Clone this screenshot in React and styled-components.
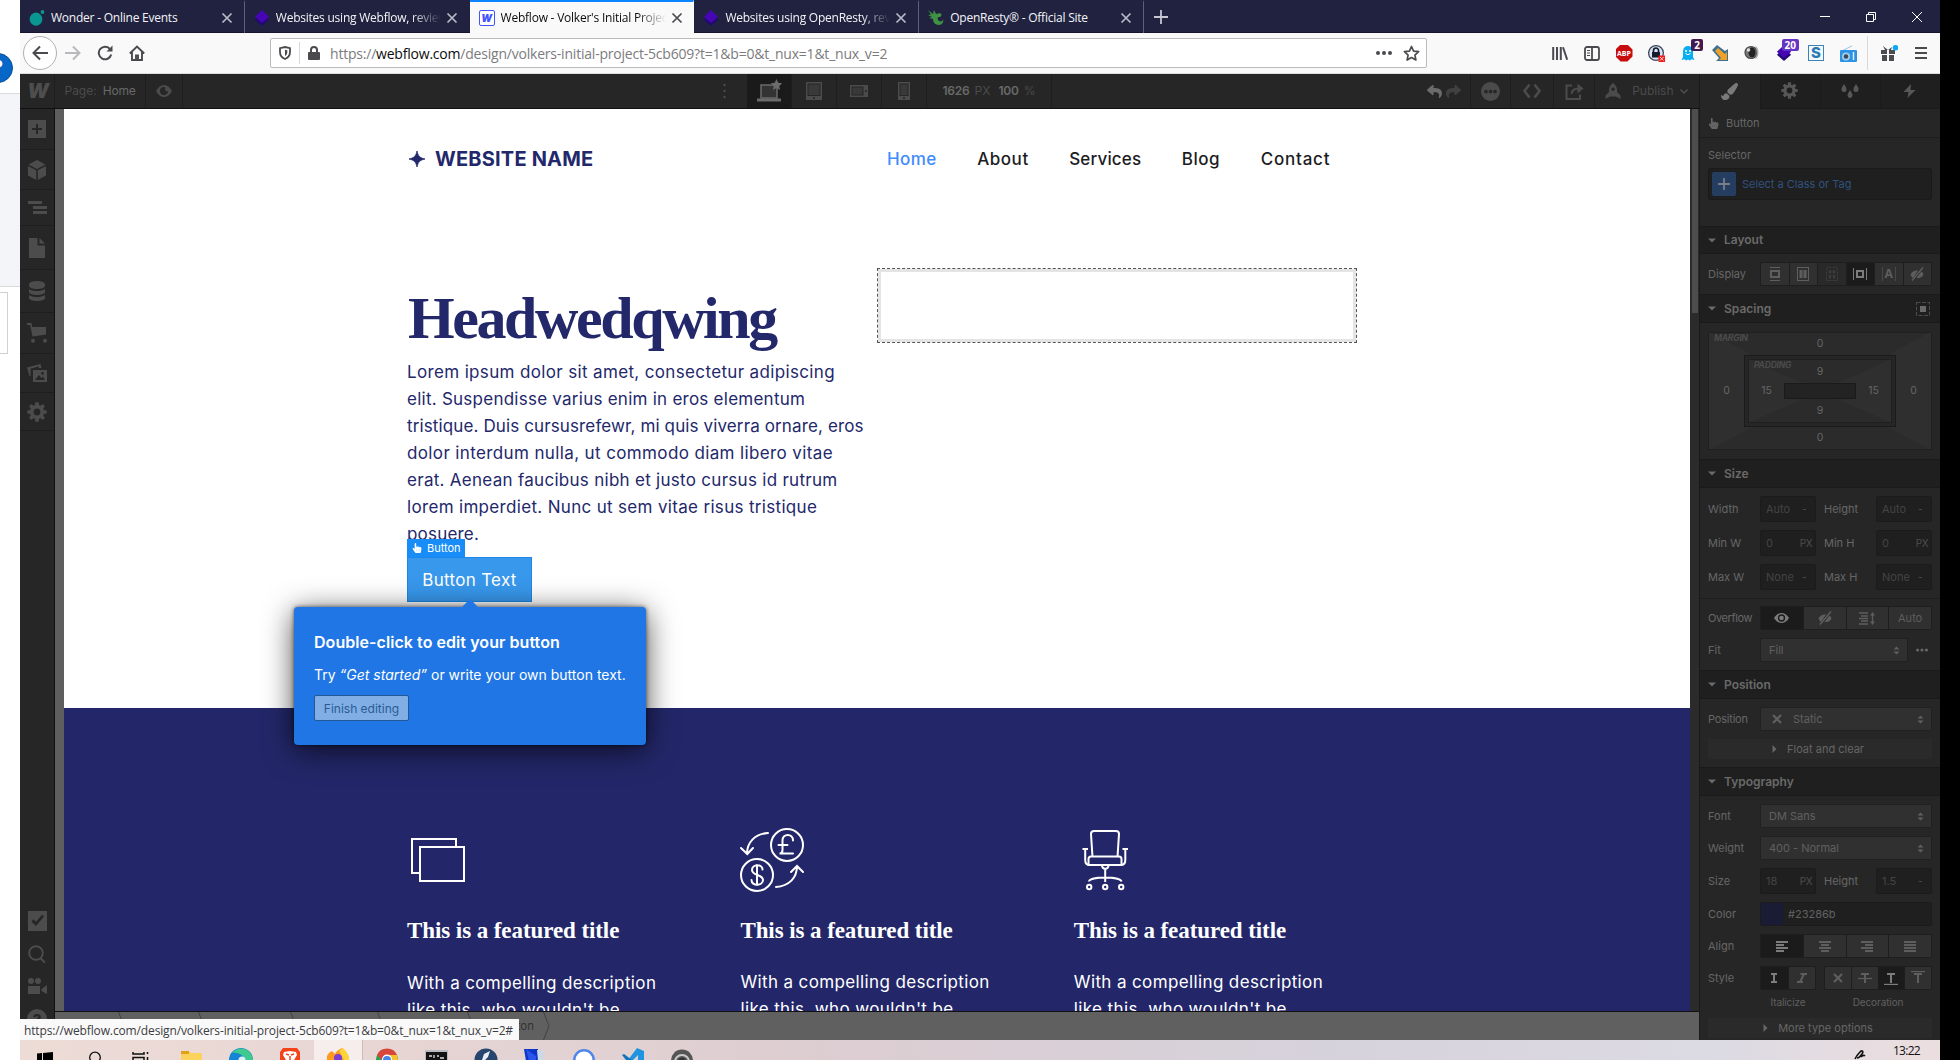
import React from "react";
import styled, { createGlobalStyle, css } from "styled-components";
import { FaPaintBrush, FaReply, FaShare, FaHandPointer } from "react-icons/fa";

const Global = createGlobalStyle`
  *, *::before, *::after { box-sizing: border-box; }
  body { margin: 0; background: #000; }
  svg { display: block; flex: none; }
`;

const UI = `Inter, "Liberation Sans", sans-serif`;
const SYS = `"Open Sans", "Noto Sans", sans-serif`;
const SERIF = `"Liberation Serif", serif`;

/* ---------- desktop frame ---------- */
const Desktop = styled.div`
  display: grid;
  grid-template-columns: 20px 1920px 20px;
  width: 1960px;
  height: 1060px;
  overflow: hidden;
  background: #000;
  font-family: ${UI};
`;
const Behind = styled.div`
  background: #fff;
  overflow: hidden;
  display: flex;
  flex-direction: column;
`;
const BehindTop = styled.div`
  height: 93px;
  padding-top: 53px;
`;
const HelpDot = styled.div`
  width: 30px;
  height: 30px;
  margin-left: -17px;
  border-radius: 50%;
  background: #0667c8;
  border: 1px solid #0a4f96;
  color: #fff;
  font: 600 19px/27px ${UI};
  text-align: center;
`;
const BehindGray = styled.div`
  height: 194px;
  background: #f4f5f8;
  border: solid #d9dadc;
  border-width: 1px 0;
`;
const BehindBox = styled.div`
  width: 8px;
  height: 62px;
  margin-top: 5px;
  border: solid #cfd0d2;
  border-width: 1px 1px 1px 0;
`;
const Window = styled.div`
  display: flex;
  flex-direction: column;
  overflow: hidden;
`;

/* ---------- browser ---------- */
const TabBar = styled.div`
  height: 33px;
  display: flex;
  background: #20223f;
  box-shadow: inset 0 -1px #14152b;
`;
const TabBox = styled.div`
  width: 224.8px;
  display: flex;
  align-items: center;
  padding: 1px 0 0 9px;
  color: ${(p) => (p.$active ? "#0c0c0d" : "#f4f4f8")};
  background: ${(p) => (p.$active ? "#f9f9fa" : "transparent")};
  border-top: 2px solid ${(p) => (p.$active ? "#0a84ff" : "transparent")};
  border-right: 1px solid ${(p) => (p.$line ? "#5f6078" : "transparent")};
  font: 12px/16px ${SYS};
`;
const TabTitle = styled.span`
  width: 165px;
  margin-left: 6px;
  overflow: hidden;
  white-space: nowrap;
  letter-spacing: -0.23px;
  ${(p) => p.$fade && css`mask-image: linear-gradient(90deg, #000 136px, transparent 165px);`}
`;
const TabClose = styled.span`
  margin-left: 5px;
  color: ${(p) => (p.$active ? "#4a4a4f" : "#b9bac8")};
`;
const NewTab = styled.div`
  width: 35px;
  display: grid;
  place-items: center;
  color: #c6c7d2;
`;
const WindowButtons = styled.div`
  margin-left: auto;
  display: flex;
  color: #fff;
`;
const WindowButton = styled.div`
  width: 46px;
  display: grid;
  place-items: center;
`;
const NavBar = styled.div`
  height: 41px;
  display: flex;
  align-items: center;
  background: #f9f9fa;
  border-bottom: 1px solid #dcdcdf;
  color: #4a4a4f;
`;
const BackButton = styled.div`
  width: 34px;
  height: 34px;
  margin-left: 3px;
  border: 1px solid #b1b1b3;
  border-radius: 50%;
  background: #fff;
  display: grid;
  place-items: center;
`;
const NavIcon = styled.div`
  width: 32px;
  display: grid;
  place-items: center;
  color: ${(p) => (p.$dim ? "#b9b9bb" : "#4a4a4f")};
`;
const UrlBox = styled.div`
  width: 1157px;
  height: 30px;
  margin-left: 117px;
  padding: 0 6px 0 8px;
  display: flex;
  align-items: center;
  background: #fff;
  border: 1px solid #bababc;
  border-radius: 2px;
`;
const UrlSep = styled.i`
  width: 1px;
  height: 22px;
  margin: 0 8px;
  background: #d7d7db;
`;
const Url = styled.span`
  margin-left: 10px;
  padding-top: 2px;
  font: 14px/20px ${SYS};
  letter-spacing: -0.21px;
  color: #7b7b7e;
  b { font-weight: 400; color: #0c0c0d; }
`;
const UrlActions = styled.div`
  margin-left: auto;
  display: flex;
  align-items: center;
  gap: 11px;
`;
const Extensions = styled.div`
  display: flex;
  margin-left: 117px;
`;
const Ext = styled.div`
  position: relative;
  width: 32px;
  height: 34px;
  display: grid;
  place-items: center;
`;
const Badge = styled.span`
  position: absolute;
  right: 1px;
  top: 3px;
  height: 12px;
  padding: 0 3px;
  border-radius: 2px;
  background: ${(p) => p.$bg};
  color: #fff;
  font: 700 10px/12px ${SYS};
`;
const Abp = styled.span`
  width: 17px;
  height: 17px;
  background: #c70d0d;
  color: #fff;
  clip-path: polygon(30% 0, 70% 0, 100% 30%, 100% 70%, 70% 100%, 30% 100%, 0 70%, 0 30%);
  font: 700 7px/17px ${SYS};
  text-align: center;
`;
const SBox = styled.span`
  width: 16px;
  height: 16px;
  background: #f4f9fd;
  border: 1px solid #3f83b5;
  color: #2b79b4;
  font: 800 15px/14px ${UI};
  text-align: center;
`;
const MenuGroup = styled.div`
  display: flex;
  align-items: center;
  height: 34px;
  margin-left: 3px;
  border-left: 1px solid #d9d9dc;
  padding-left: 5px;
`;

/* ---------- designer ---------- */
const Designer = styled.div`
  height: 966px;
  display: grid;
  grid-template-columns: 1679px 241px;
  background: #262626;
`;
const Main = styled.div`
  display: flex;
  flex-direction: column;
  min-width: 0;
`;
const Toolbar = styled.div`
  height: 35px;
  display: flex;
  background: #262626;
  border-bottom: 1px solid #111;
  color: #4b4b4b;
  font: 12px/34px ${UI};
`;
const ToolCell = styled.div`
  width: ${(p) => p.$w}px;
  display: flex;
  align-items: center;
  justify-content: center;
  gap: ${(p) => p.$gap || 0}px;
  background: ${(p) => (p.$on ? "#1a1a1a" : "transparent")};
  border-right: 1px solid ${(p) => (p.$plain ? "transparent" : "#1e1e1e")};
  color: ${(p) => (p.$on ? "#6b6b6b" : "inherit")};
  white-space: nowrap;
`;
const Strong = styled.span`
  color: #696969;
  font-weight: ${(p) => (p.$bold ? 600 : 400)};
  letter-spacing: -0.2px;
  margin-left: ${(p) => p.$ml || 0}px;
`;
const Wordmark = styled.span`
  font: italic 900 20px/30px ${UI};
  color: #4e4e4e;
  transform: translateX(1px);
`;
const PageTools = styled.div`
  display: flex;
  width: 683px;
`;
const Spacer = styled.div`flex: 1;`;
const Work = styled.div`
  height: 931px;
  display: grid;
  grid-template-columns: 35px 1fr;
`;
const Rail = styled.div`
  display: flex;
  flex-direction: column;
  background: #262626;
  border-right: 1px solid #111;
  color: #4c4c4c;
  overflow: hidden;
`;
const RailItem = styled.div`
  height: ${(p) => p.$h}px;
  flex: none;
  display: grid;
  place-items: center;
  border-bottom: 1px solid ${(p) => (p.$plain ? "transparent" : "#1e1e1e")};
`;
const HelpRow = styled.div`
  height: 35px;
  flex: none;
  display: flex;
  justify-content: center;
  padding-top: 4px;
`;
const HelpIcon = styled.span`
  width: 20px;
  height: 20px;
  border-radius: 50%;
  background: #4c4c4c;
  color: #262626;
  font: 800 15px/21px ${UI};
  text-align: center;
`;
const Stage = styled.div`
  display: flex;
  flex-direction: column;
  min-width: 0;
`;
const View = styled.div`
  height: 903px;
  display: grid;
  grid-template-columns: 9px 1626px 9px;
  background: #5e5e5e;
  border-bottom: 1px solid #111;
`;
const Site = styled.div`
  grid-column: 2;
  height: 902px;
  overflow: hidden;
  background: #fff;
`;
const ScrollTrack = styled.div`
  background: #2b2b2b;
  padding-left: 2px;
`;
const ScrollThumb = styled.div`
  width: 6px;
  height: 204px;
  background: #4d4d4d;
`;
const Crumbs = styled.div`
  position: relative;
  height: 28px;
  display: flex;
  background: #606060;
  color: #333;
  font: 11.5px/28px ${UI};
`;
const Crumb = styled.div`
  width: ${(p) => p.$w}px;
  display: flex;
  justify-content: flex-end;
  span { margin-right: 9px; }
`;
const Status = styled.div`
  position: absolute;
  left: -35px;
  top: 7px;
  width: 499px;
  height: 21px;
  padding-left: 4px;
  background: #f9f9fa;
  color: #3c3c40;
  font: 12px/23px ${SYS};
  letter-spacing: -0.135px;
  white-space: nowrap;
`;

/* ---------- website ---------- */
const Hero = styled.section`
  height: 599px;
  padding: 0 0 0 343px;
`;
const SiteNav = styled.header`
  height: 159px;
  display: flex;
  align-items: flex-start;
  padding-top: 38px;
`;
const Brand = styled.div`
  width: 480px;
  display: flex;
  align-items: center;
  gap: 10px;
  padding-left: 2px;
  color: #23286b;
  font: 700 20px/24px ${UI};
  letter-spacing: 0.2px;
`;
const NavLinks = styled.nav`
  display: flex;
  gap: 40.5px;
  padding-top: 2px;
`;
const NavLink = styled.a`
  font: 500 17px/20px ${UI};
  letter-spacing: ${(p) => p.$ls}px;
  color: ${(p) => (p.$on ? "#3f8cff" : "#1c1c1f")};
`;
const HeroGrid = styled.div`
  display: grid;
  grid-template-columns: 470px 480px;
  align-items: start;
`;
const Copy = styled.div`
  padding-top: 17px;
  color: #23286b;
`;
const Heading = styled.h1`
  margin: 0 0 8px;
  padding-left: 1px;
  font: 700 60px/66px ${SERIF};
  letter-spacing: -2.4px;
`;
const TextLine = styled.div`
  font: 17px/27px ${UI};
  letter-spacing: ${(p) => p.$ls}px;
  white-space: nowrap;
`;
const CtaWrap = styled.div`
  position: relative;
  width: 125px;
  margin-top: 9px;
`;
const Cta = styled.div`
  height: 45px;
  background: #3898ec;
  border: 1px solid #1b87ea;
  color: #fff;
  font: 17px/44px ${UI};
  letter-spacing: 0.3px;
  text-align: center;
`;
const CtaLabel = styled.div`
  position: absolute;
  left: 0;
  top: -18px;
  width: 58px;
  height: 18px;
  display: flex;
  align-items: center;
  gap: 5px;
  padding-left: 5px;
  background: #188cf7;
  color: #fff;
  font: 11px/18px ${UI};
`;
const Tip = styled.div`
  position: absolute;
  left: -113px;
  top: 50px;
  width: 352px;
  height: 138px;
  padding: 24px 20px;
  border-radius: 4px;
  background: #1f76e4;
  color: #fff;
  box-shadow: 0 5px 30px rgba(0, 0, 0, 0.7), 0 0 4px rgba(0, 0, 0, 0.6);
  font: 14px/20px ${UI};
  white-space: nowrap;
  &::before {
    content: "";
    position: absolute;
    left: 168px;
    top: -8px;
    border: solid transparent;
    border-width: 0 8px 8px;
    border-bottom-color: #1f76e4;
  }
`;
const TipTitle = styled.div`
  font: 600 16px/22px ${UI};
  letter-spacing: 0.06px;
  margin-bottom: 12px;
`;
const TipButton = styled.div`
  width: 95px;
  height: 26px;
  margin-top: 10px;
  border: 1px solid #235795;
  border-radius: 2px;
  background: #81aee4;
  color: #2a5c96;
  font: 12px/25px ${UI};
  text-align: center;
`;
const DropZone = styled.div`
  height: 75px;
  border: 1px dashed #555;
  box-shadow: inset 0 0 0 3px #e4e4e4;
`;
const Features = styled.section`
  height: 303px;
  padding: 120px 0 0 343px;
  display: grid;
  grid-template-columns: repeat(3, 333.4px);
  background: #232769;
  color: #fff;
`;
const FeatureIcon = styled.div`height: 64px;`;
const FeatureTitle = styled.h3`
  margin: 24px 0 ${(p) => p.$gap}px;
  font: 700 23px/30px ${SERIF};
  letter-spacing: -0.08px;
`;

/* ---------- style panel ---------- */
const Panel = styled.aside`
  display: flex;
  flex-direction: column;
  border-left: 1px solid #1a1a1a;
  background: #262626;
  color: #666;
  font: 11px/16px ${UI};
  overflow: hidden;
  & > * { flex: none; }
`;
const PanelTabs = styled.div`
  height: 35px;
  display: grid;
  grid-template-columns: repeat(4, 1fr);
`;
const PanelTab = styled.div`
  display: grid;
  place-items: center;
  padding: 0 2px 1px 0;
  background: ${(p) => (p.$on ? "transparent" : "#1f1f1f")};
  border: solid #1b1b1b;
  border-width: ${(p) => (p.$on ? "0" : "0 0 1px 1px")};
  color: ${(p) => (p.$on ? "#7a7a7a" : "#575757")};
`;
const ElementName = styled.div`
  height: 29px;
  display: flex;
  align-items: center;
  gap: 7px;
  padding-left: 8px;
  border-bottom: 1px solid #1d1d1d;
`;
const SelectorArea = styled.div`
  height: 88px;
  padding: 9px 8px;
`;
const SelectorBox = styled.div`
  height: 32px;
  margin-top: 5px;
  padding: 0 3px;
  display: flex;
  align-items: center;
  gap: 6px;
  background: #1f1f1f;
  border: 1px solid #1a1a1a;
  border-radius: 2px;
  color: #2f527f;
`;
const PlusBox = styled.span`
  width: 24px;
  height: 24px;
  display: grid;
  place-items: center;
  border-radius: 2px;
  background: #243d61;
  color: #7a7f87;
`;
const Head = styled.div`
  height: ${(p) => p.$h || 29}px;
  display: flex;
  align-items: center;
  padding: 0 10px 0 8px;
  background: #1f1f1f;
  border: solid #1a1a1a;
  border-width: 1px 0;
  color: #6a6a6a;
  font: 600 12px/16px ${UI};
  span { margin-left: 8px; }
  svg:last-child:not(:first-child) { margin-left: auto; }
`;
const Body = styled.div`
  display: flex;
  flex-direction: column;
  gap: 8px;
  padding: ${(p) => p.$pad || "8px"};
  ${(p) => p.$line && css`border-bottom: 1px solid #1e1e1e;`}
`;
const Row = styled.div`
  height: ${(p) => p.$h || 24}px;
  display: flex;
  align-items: center;
`;
const Label = styled.span`
  width: 52px;
  flex: none;
  letter-spacing: ${(p) => p.$ls || 0}px;
  margin-left: ${(p) => p.$ml || 0}px;
`;
const Input = styled.div`
  width: 56px;
  height: 26px;
  padding: 0 3px 0 5px;
  display: flex;
  justify-content: space-between;
  align-items: center;
  background: #1f1f1f;
  border: 1px solid #1b1b1b;
  border-radius: 2px;
  color: #444;
  small { font-size: 10px; color: #4e4e4e; min-width: 10px; letter-spacing: -0.5px; }
`;
const Select = styled.div`
  flex: 1;
  height: 24px;
  padding: 0 7px 0 8px;
  display: flex;
  align-items: center;
  background: #303030;
  border: 1px solid #212121;
  border-radius: 2px;
  color: #606060;
  svg:last-child { margin-left: auto; }
`;
const Fold = styled.div`
  height: 20px;
  display: flex;
  align-items: center;
  justify-content: center;
  gap: 10px;
  padding-right: 4px;
  background: #2a2a2a;
`;
const Segs = styled.div`
  width: ${(p) => p.$w}px;
  height: 24px;
  margin-left: ${(p) => p.$ml || 0}px;
  display: grid;
  grid-template-columns: repeat(${(p) => p.$n}, 1fr);
  gap: 1px;
  border: 1px solid #1e1e1e;
  background: #1e1e1e;
  border-radius: 2px;
`;
const Seg = styled.div`
  display: grid;
  place-items: center;
  background: ${(p) => (p.$on ? "#1b1b1b" : p.$off ? "#292929" : "#303030")};
  color: ${(p) => (p.$on ? "#7c7c7c" : p.$off ? "#3c3c3c" : "#5e5e5e")};
`;
const ColorBox = styled.div`
  flex: 1;
  height: 24px;
  display: flex;
  align-items: center;
  gap: 5px;
  background: #1f1f1f;
  border: 1px solid #1b1b1b;
  border-radius: 2px;
  color: #626262;
`;
const Swatch = styled.i`
  width: 22px;
  height: 22px;
  background: #1a1c36;
`;
const Captions = styled.div`
  height: 16px;
  margin-top: -4px;
  padding-left: 52px;
  display: grid;
  grid-template-columns: 56px 1fr;
  column-gap: 8px;
  text-align: center;
  font-size: 10px;
  letter-spacing: -0.1px;
  color: #606060;
`;
const SpacingArea = styled.div`
  height: 136px;
  padding: 9px 8px;
`;
const SpacingBox = styled.div`
  height: 118px;
  display: grid;
  grid-template-columns: 35px 152px 35px;
  grid-template-rows: 22px 72px 22px;
  place-items: center;
  border: 1px solid #202020;
  background: conic-gradient(from 0deg, #2b2b2b 0 62deg, #2f2f2f 0 118deg, #2b2b2b 0 242deg, #2f2f2f 0 298deg, #2b2b2b 0);
  font-size: 10.5px;
  color: #666;
`;
const PaddingBox = styled.div`
  grid-area: 2 / 2;
  width: 152px;
  height: 72px;
  padding: 3px;
  background: #262626;
  border: 1px solid #1b1b1b;
`;
const PaddingInner = styled.div`
  height: 100%;
  display: grid;
  grid-template-columns: 35px 72px 35px;
  grid-template-rows: 23px 16px 23px;
  place-items: center;
  background: conic-gradient(from 0deg, #2b2b2b 0 66deg, #2f2f2f 0 114deg, #2b2b2b 0 246deg, #2f2f2f 0 294deg, #2b2b2b 0);
  border: 1px solid #1f1f1f;
`;
const Core = styled.div`
  grid-area: 2 / 2;
  width: 72px;
  height: 16px;
  background: #232323;
  border: 1px solid #1a1a1a;
`;
const Corner = styled.span`
  grid-row: 1;
  grid-column: 1 / span 2;
  justify-self: start;
  align-self: start;
  margin-left: 5px;
  font: italic 700 8.5px/11px ${UI};
  letter-spacing: -0.2px;
  color: #4b4b4b;
`;
const Num = styled.span`
  grid-row: ${(p) => p.$r};
  grid-column: ${(p) => p.$c};
`;
const Dots = styled.span`
  width: 24px;
  display: flex;
  justify-content: flex-end;
  padding-right: 4px;
`;
const StaticIcon = styled.span`margin: 0 11px 0 3px;`;
const LetterBox = styled.span`
  width: 14px;
  height: 14px;
  border: solid #484848;
  border-width: 0 1px;
  font: 700 12px/14px ${UI};
  text-align: center;
`;

/* ---------- taskbar ---------- */
const Taskbar = styled.div`
  height: 20px;
  display: flex;
  background: linear-gradient(90deg, #eddcd6 0, #e6d5d3 380px, #dccdd1 800px, #d6d2dc 1300px, #dcdae3 1700px, #ecdedf 1920px);
  overflow: hidden;
`;
const Task = styled.div`
  width: 49px;
  flex: none;
  padding-top: 8px;
  display: flex;
  justify-content: center;
  background: ${(p) => (p.$on ? "#f5eeed" : "transparent")};
  border-right: ${(p) => (p.$on ? "1px solid #cbbcbb" : "0")};
`;
const Tray = styled.div`
  margin-left: auto;
  display: flex;
  gap: 27px;
  padding-right: 20px;
  color: #111;
  font: 12px/22px ${SYS};
  letter-spacing: -0.7px;
`;

/* ---------- icons ---------- */
const Svg = ({ s = 16, w, h, vb, children, ...r }) => (
  <svg width={w || s} height={h || s} viewBox={vb || `0 0 ${w || s} ${h || s}`} fill="none" stroke="currentColor" {...r}>{children}</svg>
);
const Fill = (p) => <Svg {...p} stroke="none" fill="currentColor" />;
const X = () => <Svg s={12} strokeWidth="1.7"><path d="M1.5 1.5l9 9M10.5 1.5l-9 9" /></Svg>;
const Stack = () => (
  <Svg s={16} vb="1 0 16 18" stroke="none"><path d="M9 4l8 7-8 7-8-7z" fill="#230a72" /><path d="M9 0l8 7.500-8 7-8-7z" fill="#4706b4" /></Svg>
);
const Gear = ({ s = 18 }) => (
  <Svg s={s} vb="-10 -10 20 20">
    <circle r="5.3" strokeWidth="3.8" />
    {[0, 45, 90, 135, 180, 225, 270, 315].map((a) => <path key={a} transform={`rotate(${a})`} d="M-2.1 -6.2L-1.6 -9.7H1.6L2.1 -6.2z" fill="currentColor" stroke="none" />)}
  </Svg>
);
const Caret = ({ side }) => (side
  ? <Fill w={5} h={8}><path d="M0.5 0l4 4-4 4z" /></Fill>
  : <Fill w={8} h={5}><path d="M0 0.5h8l-4 4z" /></Fill>);
const UpDown = () => <Fill w={7} h={9}><path d="M0.5 3.5L3.5 0.5l3 3zM0.5 5.5l3 3 3-3z" /></Fill>;
const EyeOff = () => (
  <Svg w={16} h={14} strokeWidth="1.4"><path d="M1.5 7.5C3 4.5 6 3 9 3.5L4 11C2.8 10 2 9 1.5 7.5zM12.5 4.5C13.6 5.3 14.3 6.3 14.5 7.5 13 10.5 10 11.5 7.5 11z" fill="currentColor" stroke="none" /><path d="M14 0.5L3 13.5" /></Svg>
);
const Lines = ({ d }) => (
  <Fill w={12} h={11}>{d.map(([x, w], i) => <rect key={i} x={x} y={i * 3} width={w} height="2" />)}</Fill>
);
const Cross = () => <Svg s={10} strokeWidth="2.2"><path d="M1 1l8 8M9 1l-8 8" /></Svg>;
const Eye = () => (
  <Fill w={15} h={10}><path fillRule="evenodd" d="M0 5C2 1.8 4.7 0 7.5 0S13 1.8 15 5C13 8.2 10.3 10 7.5 10S2 8.2 0 5zM7.5 1.3a3.7 3.7 0 1 0 0 7.4a3.7 3.7 0 1 0 0-7.4z" /><circle cx="7.5" cy="5" r="2.3" /></Fill>
);

const FavBox = styled.span`
  width: 16px;
  height: 16px;
  border: 1px solid #4353ff;
  border-radius: 2px;
  background: #fff;
  color: #4353ff;
  font: italic 900 10px/14px ${UI};
  text-align: center;
`;

const tabs = [
  { t: "Wonder - Online Events", line: true, icon: <Svg s={16} stroke="none"><ellipse cx="7" cy="9.2" rx="6.3" ry="6.6" fill="#0a9691" /><circle cx="13.5" cy="2" r="1.9" fill="#0a9691" /></Svg> },
  { t: "Websites using Webflow, reviews", fade: true, icon: <Stack /> },
  { t: "Webflow - Volker's Initial Project", fade: true, active: true, icon: <FavBox>W</FavBox> },
  { t: "Websites using OpenResty, reviews", fade: true, line: true, icon: <Stack /> },
  { t: "OpenResty® - Official Site", line: true, icon: <Svg s={16} stroke="none"><path d="M0 0l5 4 1-4 2 4 4-1c2 1 2 3 0 4-3 0-3 2-1 4 2 1 4 0 4-2 1 3-1 6-4 6-4 0-6-3-6-6L1 8l3-1-4-2 3-.5z" fill="#3f9143" /></Svg> },
];

const Tabs = () => (
  <TabBar>
    {tabs.map((x) => (
      <TabBox key={x.t} $active={x.active} $line={x.line}>
        {x.icon}
        <TabTitle $fade={x.fade}>{x.t}</TabTitle>
        <TabClose $active={x.active}><X /></TabClose>
      </TabBox>
    ))}
    <NewTab><Svg s={14} strokeWidth="1.8"><path d="M7 0v14M0 7h14" /></Svg></NewTab>
    <WindowButtons>
      <WindowButton><Svg s={10}><path d="M0 4.5h10" /></Svg></WindowButton>
      <WindowButton><Svg s={10}><path d="M.5 2.5h7v7h-7zM2.5 2.5v-2h7v7h-2" /></Svg></WindowButton>
      <WindowButton><Svg s={10}><path d="M0 0l10 10M10 0L0 10" /></Svg></WindowButton>
    </WindowButtons>
  </TabBar>
);

const Address = () => (
  <NavBar>
    <BackButton><Svg s={16} strokeWidth="2"><path d="M16 8H1.5M8 1.5L1.5 8 8 14.5" /></Svg></BackButton>
    <NavIcon $dim><Svg s={16} strokeWidth="2"><path d="M0 8h14.5M8 1.5L14.5 8 8 14.5" /></Svg></NavIcon>
    <NavIcon><Svg s={16} strokeWidth="2"><path d="M13.2 4.3A6.3 6.3 0 1 0 14.2 9.5" /><path d="M15.5 0.5v6h-6z" fill="currentColor" stroke="none" /></Svg></NavIcon>
    <NavIcon><Svg s={16} strokeWidth="1.9"><path d="M0.8 8.5L8 1.5l7.200 7M3 7v8h10V7M7 15v-4.5h2V15" /></Svg></NavIcon>
    <UrlBox>
      <Svg w={12} h={14} strokeWidth="1.8"><path d="M6 1L11 2.2V6c0 3.5-1.5 5.5-5 7C2.5 11.5 1 9.5 1 6V2.2z" /><path d="M6 3.8v6.2c1.7-1 2.3-2.200 2.3-4.200V4.3z" fill="currentColor" stroke="none" /></Svg>
      <UrlSep />
      <Svg w={12} h={14} strokeWidth="2"><path d="M3 7V4a3 3 0 0 1 6 0v3" /><rect y="6" width="12" height="8" rx="1" fill="currentColor" stroke="none" /></Svg>
      <Url>https://<b>webflow.com</b>/design/volkers-initial-project-5cb609?t=1&amp;b=0&amp;t_nux=1&amp;t_nux_v=2</Url>
      <UrlActions>
        <Fill w={16} h={4}><circle cx="2" cy="2" r="2" /><circle cx="8" cy="2" r="2" /><circle cx="14" cy="2" r="2" /></Fill>
        <Svg s={17} strokeWidth="1.7"><path d="M8.5 1.5l2.1 4.600 5 .6-3.700 3.400 1 4.900-4.400-2.500L4.100 15l1-4.900L1.400 6.700l5-.6z" strokeLinejoin="round" /></Svg>
      </UrlActions>
    </UrlBox>
    <Extensions>
      <Ext><Svg s={16} strokeWidth="2"><path d="M1.2 2v13M5 2v13M8.8 2v13M11 2.2l4.2 12.6" /></Svg></Ext>
      <Ext><Svg s={16} strokeWidth="1.8"><rect x="1" y="2" width="14" height="13" rx="2" /><path d="M8 2v13" /><path d="M3 5.5h3M3 8h3M3 10.5h3" strokeWidth="1" /></Svg></Ext>
      <Ext><Abp>ABP</Abp></Ext>
      <Ext><Svg s={17}><circle cx="8" cy="8" r="7.4" fill="#d9e4f7" stroke="#444c5c" strokeWidth="1.3" /><path d="M5.500 8V5.500a2.500 2.500 0 0 1 5 0V8" stroke="#141b2e" strokeWidth="1.7" /><rect x="4" y="7" width="8" height="5.5" fill="#141b2e" stroke="none" /><rect x="10.5" y="10.5" width="6.5" height="6.5" fill="#f21c1c" stroke="none" /><path d="M12 12l3.500 3.500M15.500 12L12 15.500" stroke="#fff" strokeWidth=".8" /></Svg></Ext>
      <Ext><Svg w={14} h={16} stroke="none"><path d="M2 7c0-4 2-6 5-6s5 2 5 6v5l1.500 3-3-.8L9 15.500l-2-1-2 1-1.500-1.300-3 .8L2 12z" fill="#09aef0" /><circle cx="5" cy="6" r="1" fill="#fff" /><circle cx="9" cy="6" r="1" fill="#fff" /><path d="M4.500 8.500q2.500 2.500 5 0" stroke="#fff" /></Svg><Badge $bg="#43194f">2</Badge></Ext>
      <Ext><Svg s={16} stroke="none"><path d="M0 5l5-5 8 6 3-2v12H4l3-3z" fill="#3d7191" /><path d="M3 6l3-3 7 6 2-2v8H7l2-2z" fill="#f0a128" /></Svg></Ext>
      <Ext><Svg s={16}><circle cx="7" cy="7.500" r="6" fill="#777" stroke="#4a4a4a" strokeWidth="1.2" /><ellipse cx="8" cy="7.500" rx="3.500" ry="5" fill="#222" stroke="none" /><circle cx="4.500" cy="5" r="1.800" fill="#ddd" stroke="none" /><path d="M11.500 1.500c3 3 3 9 0 12" stroke="#aaa" strokeWidth="1.500" /></Svg></Ext>
      <Ext><Stack /><Badge $bg="#6435c5">20</Badge></Ext>
      <Ext><SBox>S</SBox></Ext>
      <Ext><Svg w={17} h={17}><path d="M2 6L12 .8" stroke="#8ec5e6" /><rect x="0" y="5" width="17" height="12" rx="1" fill="#2f93e4" stroke="none" /><circle cx="6" cy="11.5" r="4" fill="#9fd0f0" stroke="none" /><circle cx="6" cy="11.5" r="2.3" fill="#3c4a55" stroke="none" /><path d="M13.5 7v8" stroke="#d9effc" strokeWidth="1.5" /></Svg></Ext>
    </Extensions>
    <MenuGroup>
      <NavIcon><Svg w={18} h={17} stroke="none"><path d="M1 5h6v4H1zM9 5h6v4H9zM2 10h5v6H2zM9 10h5v6H9zM3 1l5 4 4-3-1 3H5z" fill="#4a4a4f" /><circle cx="15.5" cy="2.8" r="2.8" fill="#0aa8f5" /></Svg></NavIcon>
      <NavIcon><Svg s={12} strokeWidth="2"><path d="M0 1h12M0 6h12M0 11h12" /></Svg></NavIcon>
    </MenuGroup>
  </NavBar>
);

const InlineIcon = styled.span`
  display: inline-block;
  vertical-align: 1px;
  margin-left: 3px;
`;

const TopToolbar = () => (
  <Toolbar>
    <PageTools>
      <ToolCell $w={35}><Wordmark>W</Wordmark></ToolCell>
      <ToolCell $w={91} $gap={6}>Page: <Strong>Home</Strong></ToolCell>
      <ToolCell $w={37}><Fill w={16} h={12}><path fillRule="evenodd" d="M0 6C2 2 5 0 8 0s6 2 8 6c-2 4-5 6-8 6S2 10 0 6zM8 2a4 4 0 1 0 4 4c-1.5 1-4-.5-2.5-3.5z" /></Fill></ToolCell>
    </PageTools>
    <ToolCell $w={44} $plain><Fill w={4} h={16}><circle cx="1.5" cy="2" r="1.2" /><circle cx="1.5" cy="8" r="1.2" /><circle cx="1.5" cy="14" r="1.2" /></Fill></ToolCell>
    <ToolCell $w={45} $on>
      <Svg w={26} h={24} stroke="none"><path d="M5 6h16v13H5z" fill="#333" stroke="#6b6b6b" strokeWidth="1.5" /><path d="M1 19.500h24v3H1z" fill="#6b6b6b" /><path d="M20.500 0l1.800 3.800 4 .5-3 2.700.8 4-3.600-2-3.600 2 .8-4-3-2.700 4-.5z" fill="#6b6b6b" /></Svg>
    </ToolCell>
    <ToolCell $w={45}><Fill w={16} h={18}><path fillRule="evenodd" d="M0 0h16v18H0zM1.500 1.500h13v12.500h-13zM7 15.500h2v1.500H7z" /><path d="M2.500 2.500h11V13h-11z" opacity=".5" /></Fill></ToolCell>
    <ToolCell $w={45}><Fill w={18} h={12}><path fillRule="evenodd" d="M0 0h18v12H0zM1.500 1.500h12v9h-12zM15 5h1.500v2H15z" /><path d="M2.500 2.500h10v7h-10z" opacity=".5" /></Fill></ToolCell>
    <ToolCell $w={45}><Fill w={12} h={18}><path fillRule="evenodd" d="M0 0h12v18H0zM1.500 1.500h9V14h-9zM5 15.500h2v1.500H5z" /><path d="M2.500 2.500h7V13h-7z" opacity=".5" /></Fill></ToolCell>
    <ToolCell $w={125} $gap={5}><Strong $bold>1626</Strong><span>PX</span><Strong $bold $ml={3}>100</Strong><span>%</span></ToolCell>
    <Spacer />
    <ToolCell $w={53} $gap={4}><FaReply size={15} color="#6b6b6b" /><FaShare size={15} color="#404040" /></ToolCell>
    <ToolCell $w={40}><Fill s={19}><path fillRule="evenodd" d="M9.500 0a9.500 9.500 0 1 0 0 19a9.500 9.500 0 1 0 0-19zM5 7.700a1.900 1.900 0 1 1 0 3.800a1.900 1.900 0 1 1 0-3.800zM9.500 7.700a1.900 1.900 0 1 1 0 3.800a1.900 1.900 0 1 1 0-3.800zM14 7.700a1.900 1.900 0 1 1 0 3.800a1.900 1.900 0 1 1 0-3.800z" /></Fill></ToolCell>
    <ToolCell $w={43}><Svg w={20} h={14} strokeWidth="2.6"><path d="M7.500 0.500L2.500 7l5 6.500M12.500 0.500l5 6.500-5 6.500" /></Svg></ToolCell>
    <ToolCell $w={41}><Svg w={19} h={17} strokeWidth="2"><path d="M7 2.500H1.500V16H15v-4.500M6.500 11c.5-4 3-5.500 7-5.500" /><path d="M12.500 0.500l6 5-6 5z" fill="currentColor" stroke="none" /></Svg></ToolCell>
    <ToolCell $w={104} $gap={11} $plain>
      <Fill w={16} h={16}><path fillRule="evenodd" d="M8 0c3 2 4.500 5 4 9l3.500 3.500V16L11 13.500H5L.5 16v-3.500L4 9C3.500 5 5 2 8 0zM8 4.500a1.700 1.700 0 1 0 0 3.400a1.700 1.700 0 1 0 0-3.400z" /></Fill>
      <span>Publish <InlineIcon><Svg w={8} h={5} strokeWidth="1.7"><path d="M.5.5L4 4 7.500.5" /></Svg></InlineIcon></span>
    </ToolCell>
  </Toolbar>
);

const LeftRail = () => (
  <Rail>
    <RailItem $h={41}><Fill s={18}><path fillRule="evenodd" d="M0 0h18v18H0zM8 4h2v4h4v2h-4v4H8v-4H4V8h4z" /></Fill></RailItem>
    <RailItem $h={40}><Fill w={18} h={20}><path d="M9 0l8.500 4.500L9 9 .5 4.500zM0 6l8.200 4.200V20L0 15.500zM18 6l-8.200 4.200V20l8.200-4.500z" /></Fill></RailItem>
    <RailItem $h={36}><Fill w={19} h={13}><path d="M0 0h14v3H0zM5 5h14v3H5zM5 10h14v3H5z" /></Fill></RailItem>
    <RailItem $h={44}><Fill w={16} h={20}><path d="M0 0h8.500v7.500H16V20H0zM10.500 0L16 5.500h-5.500z" /></Fill></RailItem>
    <RailItem $h={43}><Fill w={16} h={20}><path d="M0 3.500C0 1 4 0 8 0s8 1 8 3.500v1C16 7 12 8 8 8S0 7 0 4.500zM0 8c2 1.500 5 2 8 2s6-.5 8-2v3c0 2-4 3-8 3s-8-1-8-3zM0 14c2 1.500 5 2 8 2s6-.5 8-2v3c0 2-4 3-8 3s-8-1-8-3z" /></Fill></RailItem>
    <RailItem $h={41}><Fill w={20} h={20}><path d="M0 0h4.500l.8 4H19v7.500L5.500 13.500 3.200 2H0z" /><circle cx="6" cy="17.800" r="2" /><circle cx="18" cy="17.800" r="2" /></Fill></RailItem>
    <RailItem $h={39}><Fill w={20} h={18}><path d="M0 3.500L13.500 0l1 4H12l-.5-1.500-8 2.200V12H2.500z" /><path fillRule="evenodd" d="M6 6h14v12H6zM8 16l4-5 2.500 3 1.500-1.500 2 3.500zM15.500 8a1.400 1.400 0 1 0 0 2.800a1.400 1.400 0 1 0 0-2.800z" /></Fill></RailItem>
    <RailItem $h={38}><Gear s={20} /></RailItem>
    <Spacer />
    <RailItem $h={38} $plain><Fill w={19} h={20}><path fillRule="evenodd" d="M0 0h19v20H0zM3.500 10.500L8 15 16 5.500l-2-1.700-6 7-2.700-2.500z" /></Fill></RailItem>
    <RailItem $h={28} $plain><Svg s={18} strokeWidth="1.9"><circle cx="8" cy="8" r="6.800" /><path d="M12.500 13l4.500 5" /></Svg></RailItem>
    <RailItem $h={37} $plain><Fill w={20} h={16}><circle cx="4" cy="3" r="3" /><circle cx="11" cy="3" r="3" /><path d="M1 8h12v8H1zM14.500 11L20 7v9l-5.500-3z" /></Fill></RailItem>
    <HelpRow><HelpIcon>?</HelpIcon></HelpRow>
  </Rail>
);

const lines = [
  ["Lorem ipsum dolor sit amet, consectetur adipiscing", 0.353],
  ["elit. Suspendisse varius enim in eros elementum", 0.25],
  ["tristique. Duis cursusrefewr, mi quis viverra ornare, eros", 0.123],
  ["dolor interdum nulla, ut commodo diam libero vitae", 0.375],
  ["erat. Aenean faucibus nibh et justo cursus id rutrum", 0.285],
  ["lorem imperdiet. Nunc ut sem vitae risus tristique", 0.325],
  ["posuere.", 0.2],
];
const nav = [["Home", 0.4], ["About", 0.55], ["Services", 0.15], ["Blog", 0.55], ["Contact", 0.78]];

const FolderIcon = () => (
  <Svg s={64} strokeWidth="2"><path d="M13 45H5V11h44v8M13 19h44v34H13z" /></Svg>
);
const CurrencyIcon = () => (
  <Svg s={64} strokeWidth="2" strokeLinecap="round">
    <circle cx="47" cy="17" r="16" /><circle cx="17" cy="47" r="16" />
    <path d="M28 5C15 6 7 14 7 26M1 20l6.300 6L13 20M36 59c13-1 21-9 21-21M51 44l6-6 6 6" />
    <path d="M53 12.500C53 5 42.500 5 42.500 12.500V22c0 2-1 3.500-3 3.500H53M38.500 17h9" />
    <path d="M22.500 41.500C22.500 35.500 12 36 12 42s11 4 11 10-11.500 6.500-11.500 0M17 37v20" />
  </Svg>
);
const ChairIcon = () => (
  <Svg s={64} strokeWidth="2">
    <path d="M18.500 29L17 6c0-2 1-3 3-3h22c2 0 3 1 3 3l-1.500 23" />
    <path d="M14.500 36v-5c0-1.500 1-2.500 2.500-2.500h28c1.500 0 2.500 1 2.500 2.500v5c0 .8-.2 1-1 1h-31c-.8 0-1-.2-1-1z" />
    <path d="M8.500 21h5.500M11.200 21v11c0 3 1.500 5 4.500 5M54 21h-5.500M51.300 21v11c0 3-1.500 5-4.500 5M28 37c0 5 6.500 5 6.500 0M31.200 41v13M15 53.500C15.500 48 46.500 48 47.500 53.500" />
    <circle cx="15.200" cy="59" r="2.200" /><circle cx="31.200" cy="59" r="2.200" /><circle cx="47.200" cy="59" r="2.200" />
  </Svg>
);

const Website = () => (
  <Site>
    <Hero>
      <SiteNav>
        <Brand><Fill s={16}><path d="M8 0c1 5 3 7 8 8-5 1-7 3-8 8-1-5-3-7-8-8 5-1 7-3 8-8z" stroke="currentColor" strokeWidth=".8" /></Fill>WEBSITE NAME</Brand>
        <NavLinks>{nav.map(([t, ls], i) => <NavLink key={t} $ls={ls} $on={i === 0}>{t}</NavLink>)}</NavLinks>
      </SiteNav>
      <HeroGrid>
        <Copy>
          <Heading>Headwedqwing</Heading>
          {lines.map(([t, ls]) => <TextLine key={t} $ls={ls}>{t}</TextLine>)}
          <CtaWrap>
            <Cta>Button Text</Cta>
            <CtaLabel><FaHandPointer size={10} />Button</CtaLabel>
            <Tip>
              <TipTitle>Double-click to edit your button</TipTitle>
              Try <em>“Get started”</em> or write your own button text.
              <TipButton>Finish editing</TipButton>
            </Tip>
          </CtaWrap>
        </Copy>
        <DropZone />
      </HeroGrid>
    </Hero>
    <Features>
      {[FolderIcon, CurrencyIcon, ChairIcon].map((Icon, i) => (
        <div key={i}>
          <FeatureIcon><Icon /></FeatureIcon>
          <FeatureTitle $gap={i ? 23 : 24}>This is a featured title</FeatureTitle>
          <TextLine $ls={0.375}>With a compelling description</TextLine>
          <TextLine $ls={0.375}>like this, who wouldn't be</TextLine>
        </div>
      ))}
    </Features>
  </Site>
);

const Segment = ({ n, w, ml, items }) => (
  <Segs $n={n} $w={w} $ml={ml}>{items.map(([el, st], i) => <Seg key={i} $on={st === "on"} $off={st === "off"}>{el}</Seg>)}</Segs>
);
const SizeRow = ({ a, av, au, b, bv, bu }) => (
  <Row $h={26}>
    <Label>{a}</Label><Input>{av}<small>{au}</small></Input>
    <Label $ml={8}>{b}</Label><Input>{bv}<small>{bu}</small></Input>
  </Row>
);

const displayIcons = [
  [<Svg w={14} h={14}><path d="M2 .5h10M2 13.500h10" /><rect x="3" y="4" width="8" height="6" strokeWidth="2" /></Svg>],
  [<Svg w={14} h={14}><rect x="1.500" y=".5" width="11" height="13" /><path d="M5 3v8M9 3v8" strokeWidth="3" /></Svg>],
  [<Svg w={14} h={14}><rect x="1.500" y=".5" width="11" height="13" strokeDasharray="2 1" /><path d="M5 3v3.500M9 3v3.500M5 8v3.500M9 8v3.500" strokeWidth="2.5" /></Svg>, "off"],
  [<Svg w={14} h={14}><path d="M.5 1v12M13.500 1v12" /><rect x="4" y="4" width="6" height="6" strokeWidth="2" /></Svg>, "on"],
  [<LetterBox>A</LetterBox>],
  [<EyeOff />],
];
const Tee = ({ d }) => <Svg w={14} h={14} strokeWidth="2"><path d="M3 3h8M7 3v9" /><path d={d} strokeWidth="1.2" /></Svg>;

const StylePanel = () => (
  <Panel>
    <PanelTabs>
      <PanelTab $on><FaPaintBrush size={17} /></PanelTab>
      <PanelTab><Gear s={17} /></PanelTab>
      <PanelTab><Fill w={18} h={14}><path d="M3 0c2 3 2.500 4 2.500 5.500a2.500 2.500 0 0 1-5 0C.5 4 1 3 3 0zM15 0c2 3 2.500 4 2.500 5.500a2.500 2.500 0 0 1-5 0C12.500 4 13 3 15 0zM9 6c2 3 2.500 4 2.500 5.500a2.500 2.500 0 0 1-5 0C6.500 10 7 9 9 6z" /></Fill></PanelTab>
      <PanelTab><Fill w={13} h={14}><path d="M8 0L0.500 8H5.500L4.500 14 12.500 6H7.500z" /></Fill></PanelTab>
    </PanelTabs>
    <ElementName><FaHandPointer size={11} />Button</ElementName>
    <SelectorArea>
      Selector
      <SelectorBox><PlusBox><Svg s={12} strokeWidth="1.8"><path d="M6 0v12M0 6h12" /></Svg></PlusBox>Select a Class or Tag</SelectorBox>
    </SelectorArea>
    <Head $h={28}><Caret /><span>Layout</span></Head>
    <Body><Row><Label>Display</Label><Segment n={6} w={172} items={displayIcons} /></Row></Body>
    <Head><Caret /><span>Spacing</span><Svg s={14}><rect x=".5" y=".5" width="13" height="13" strokeDasharray="4 1.5" opacity=".6" /><rect x="4" y="4" width="6" height="6" fill="currentColor" stroke="none" /></Svg></Head>
    <SpacingArea>
      <SpacingBox>
        <Corner>MARGIN</Corner>
        <Num $r={1} $c={2}>0</Num><Num $r={2} $c={1}>0</Num><Num $r={2} $c={3}>0</Num><Num $r={3} $c={2}>0</Num>
        <PaddingBox>
          <PaddingInner>
            <Corner>PADDING</Corner>
            <Num $r={1} $c={2}>9</Num><Num $r={2} $c={1}>15</Num><Core /><Num $r={2} $c={3}>15</Num><Num $r={3} $c={2}>9</Num>
          </PaddingInner>
        </PaddingBox>
      </SpacingBox>
    </SpacingArea>
    <Head><Caret /><span>Size</span></Head>
    <Body $line>
      <SizeRow a="Width" av="Auto" au="-" b="Height" bv="Auto" bu="-" />
      <SizeRow a="Min W" av="0" au="PX" b="Min H" bv="0" bu="PX" />
      <SizeRow a="Max W" av="None" au="-" b="Max H" bv="None" bu="-" />
    </Body>
    <Body $pad="7px 8px 8px">
      <Row><Label $ls={-0.4}>Overflow</Label><Segment n={4} w={172} items={[[<Eye />, "on"], [<EyeOff />], [<Svg w={16} h={13}><path d="M0 1h9M2 4h7M0 6.500h9M2 9h7M0 12h9" strokeWidth="1.3" /><path d="M13.500 2v9" strokeWidth="1.3" /><path d="M11 3.500L13.500 0 16 3.500zM11 9.500l2.500 3.500 2.500-3.500z" fill="currentColor" stroke="none" /></Svg>], ["Auto"]]} /></Row>
      <Row><Label>Fit</Label><Select>Fill<UpDown /></Select><Dots><Fill w={12} h={4}><circle cx="1.6" cy="2" r="1.6" /><circle cx="6" cy="2" r="1.6" /><circle cx="10.4" cy="2" r="1.6" /></Fill></Dots></Row>
    </Body>
    <Head><Caret /><span>Position</span></Head>
    <Body>
      <Row><Label $ls={-0.2}>Position</Label><Select><StaticIcon><Cross /></StaticIcon>Static<UpDown /></Select></Row>
      <Fold><Caret side />Float and clear</Fold>
    </Body>
    <Head><Caret /><span>Typography</span></Head>
    <Body>
      <Row><Label>Font</Label><Select>DM Sans<UpDown /></Select></Row>
      <Row><Label>Weight</Label><Select>400 - Normal<UpDown /></Select></Row>
      <SizeRow a="Size" av="18" au="PX" b="Height" bv="1.5" bu="-" />
      <Row><Label>Color</Label><ColorBox><Swatch />#23286b</ColorBox></Row>
      <Row><Label>Align</Label><Segment n={4} w={172} items={[
        [<Lines d={[[0, 12], [0, 8], [0, 12], [0, 8]]} />, "on"],
        [<Lines d={[[0, 12], [2, 8], [0, 12], [2, 8]]} />],
        [<Lines d={[[0, 12], [4, 8], [0, 12], [4, 8]]} />],
        [<Lines d={[[0, 12], [0, 12], [0, 12], [0, 12]]} />],
      ]} /></Row>
      <Row><Label>Style</Label>
        <Segment n={2} w={56} items={[[<Svg w={10} h={12} strokeWidth="2"><path d="M2 2h6M5 2v8M2 10h6" /></Svg>, "on"], [<Svg w={12} h={12} strokeWidth="2"><path d="M4.5 2H11M8 2l-4 8M1 10h6" /></Svg>]]} />
        <Segment n={4} w={108} ml={8} items={[[<Cross />], [<Tee d="M0 7.500h14" />], [<Tee d="M0 13.400h14" />, "on"], [<Tee d="M0 .6h14" />]]} />
      </Row>
      <Captions><span>Italicize</span><span>Decoration</span></Captions>
      <Fold><Caret side />More type options</Fold>
    </Body>
  </Panel>
);

const crumbs = [70, 80, 92, 87, 90, 76];
const Breadcrumbs = () => (
  <Crumbs>
    {crumbs.map((w, i) => (
      <Crumb key={i} $w={w}>{i === 5 && <span>Button</span>}<Svg w={7} h={28} stroke="#424242"><path d="M.5 0l5.500 14-5.500 14" /></Svg></Crumb>
    ))}
    <Status>https://webflow.com/design/volkers-initial-project-5cb609?t=1&amp;b=0&amp;t_nux=1&amp;t_nux_v=2#</Status>
  </Crumbs>
);

const T = (p) => <Svg s={24} stroke="none" {...p} />;
const tasks = [
  <T><path d="M4 5.500l5-.5v7H4zM10 5l10-1v8H10z" fill="#000" /></T>,
  <T><circle cx="13" cy="9.500" r="5.300" stroke="#111" strokeWidth="1.3" /></T>,
  <T><path d="M2 4v2h11V4M2 12v-2.500h11V12M16.500 4v2M16.500 9v3" stroke="#111" strokeWidth="1.500" /></T>,
  <T><path d="M1 3h8l2 2h11v8H1z" fill="#fbd25c" /><path d="M1 3h8v3H1z" fill="#e0a019" /></T>,
  <T><circle cx="12" cy="12" r="12" fill="#1583d6" /><path d="M3 5C8 -2 22 -2 24 12h-9C16 7 8 4 3 5z" fill="#3fcb8f" /><circle cx="13" cy="12" r="3.500" fill="#dff0fa" /></T>,
  <T><path d="M5 0h14l3 4v8H2V4z" fill="#f4431a" /><path d="M6 4l6-1 6 1 1 3-3 5H8L5 7z" fill="#fff" /><path d="M8 6l3 1M16 6l-3 1M12 8v4" stroke="#f4431a" strokeWidth="1.5" /></T>,
  <T><path d="M1 12C0 6 4 4 6 3l3 3c1-3 5-5 7-6 3 3 7 6 7 12z" fill="#ff9a1f" /><path d="M13 3l4-3c4 4 6 7 6 12h-5z" fill="#ffd43a" /><circle cx="12" cy="10" r="4" fill="#7b3fd6" /></T>,
  <T><circle cx="11" cy="12" r="11" fill="#2fa24f" /><path d="M1 7A11 11 0 0 1 21 7H11l-5 5z" fill="#d8463a" /><path d="M21 7h-10l3 5h8z" fill="#f5c32c" /><circle cx="11" cy="11.5" r="5" fill="#fff" /><circle cx="11" cy="12" r="4" fill="#4683ea" /></T>,
  <T><path d="M0 2h23v12H0z" fill="#b9bcc0" /><path d="M1 4h21v10H1z" fill="#131313" /><path d="M4 8h3M9 7v3M12 8h2M15 10h4" stroke="#ddd" strokeWidth="1.3" /></T>,
  <T><circle cx="12" cy="12" r="11.5" fill="#27456f" /><path d="M8 12l2-6 6-3-2 6-3 3z" fill="#e8eef6" /></T>,
  <T><path d="M1 1h14v12H3z" fill="#0b35c9" /><path d="M14 2l7 1v10h-6z" fill="#cfd8e6" /><path d="M3 1l10 7v5H6z" fill="#2a55ea" /></T>,
  <T><circle cx="12" cy="12" r="9.7" fill="#fff" stroke="#4f86ea" strokeWidth="2.5" /></T>,
  <T><path d="M16 0l7 3v9h-6V7l-5 5H7z" fill="#1f94e0" /><path d="M1 7l2-1 8 6H5z" fill="#1573ba" /></T>,
  <T><circle cx="12" cy="12.5" r="11" fill="#555" /><path d="M5 14a7 7 0 0 1 14 0" stroke="#c9c9c9" strokeWidth="2" /><circle cx="12" cy="13" r="3.5" fill="#333" /></T>,
];

export default function App() {
  return (
    <Desktop>
      <Global />
      <Behind>
        <BehindTop><HelpDot>?</HelpDot></BehindTop>
        <BehindGray />
        <BehindBox />
      </Behind>
      <Window>
        <Tabs />
        <Address />
        <Designer>
          <Main>
            <TopToolbar />
            <Work>
              <LeftRail />
              <Stage>
                <View>
                  <Website />
                  <ScrollTrack><ScrollThumb /></ScrollTrack>
                </View>
                <Breadcrumbs />
              </Stage>
            </Work>
          </Main>
          <StylePanel />
        </Designer>
        <Taskbar>
          {tasks.map((t, i) => <Task key={i} $on={i === 6}>{t}</Task>)}
          <Tray>
            <Svg w={12} h={20} strokeWidth="1.6"><path d="M1 19c1-2 3-5 5-7s4-1 2 2-4 4-5 4M7 17c2-2 3-2 4-1" /></Svg>
            <span>13:22</span>
          </Tray>
        </Taskbar>
      </Window>
    </Desktop>
  );
}
